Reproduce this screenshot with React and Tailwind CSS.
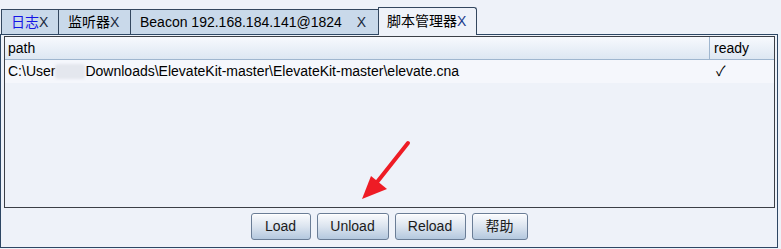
import React from 'react'

const TABS = [
  { label: '日志', active: false, blue: true, width: 'w-[57px]' },
  { label: '监听器', active: false, width: 'w-[72px]' },
  { label: 'Beacon 192.168.184.141@1824', active: false, width: 'w-[248px]', spread: true },
  { label: '脚本管理器', active: true, width: 'w-[99px]' },
]

const BUTTONS = [
  { label: 'Load', width: 'w-[60px]' },
  { label: 'Unload', width: 'w-[72px]' },
  { label: 'Reload', width: 'w-[71px]' },
  { label: '帮助', width: 'w-[56px]' },
]

function Tab({ tab }) {
  if (tab.active) {
    return (
      <div className={`${tab.width} relative -mb-px flex h-[28px] items-center whitespace-nowrap rounded-tr-[3px] border border-b-0 border-[#33475f] bg-[#eef2f9] pl-[8px] text-[14px] text-black`}>
        {tab.label}
        <span className="text-[#1a3c8c]">X</span>
      </div>
    )
  }
  return (
    <div className={`${tab.width} flex h-[25px] items-center whitespace-nowrap border border-b-0 border-r-0 border-[#33475f] bg-[#c9d9ea] pl-[9px] pr-[12px] text-[14px] ${tab.spread ? 'justify-between' : ''}`}>
      <span className={tab.blue ? 'text-[#1515e6]' : 'text-black'}>
        {tab.label}
        {!tab.spread && <span className="text-[#1a2a40]">X</span>}
      </span>
      {tab.spread && <span className="text-[#1a2a40]">X</span>}
    </div>
  )
}

export default function App() {
  return (
    <div className="relative h-[249px] w-[781px] overflow-hidden bg-[#eef2f9] font-['Liberation_Sans','Noto_Sans_CJK_SC',sans-serif]">
      <div className="h-[6px]" />

      <div className="flex h-[28px] items-end pl-[1px]">
        {TABS.map(tab => <Tab key={tab.label} tab={tab} />)}
      </div>

      <div className="mr-[3px] h-[214px] border border-[#2d4764] bg-[#eef2f9] pt-[1px]">
        <div className="ml-[3px] mr-[2px] flex h-[172px] flex-col border border-[#3b3f46] bg-[#eef2f9]">
          <div className="flex h-[23px] border-b border-[#9fb6cf] bg-gradient-to-b from-[#f7f9fd] to-[#dde7f2] text-[14px] text-black">
            <div className="flex w-[705px] items-center border-r border-[#9fb6cf] pl-[3px]">path</div>
            <div className="flex flex-1 items-center pl-[4px]">ready</div>
          </div>
          <div className="flex h-[23px] bg-[#f5f7fc] text-[14px] text-black">
            <div className="flex w-[706px] items-center whitespace-nowrap pl-[3px]">
              C:\User
              <span className="inline-block h-[15px] w-[30px] rounded-[3px] bg-[#e4e7ee] blur-[1px]" />
              Downloads\ElevateKit-master\ElevateKit-master\elevate.cna
            </div>
            <div className="flex flex-1 items-center pl-[5px] text-[14px]">✓</div>
          </div>
        </div>

        <div className="flex justify-center gap-[6px] pt-[5px]">
          {BUTTONS.map(btn => (
            <div
              key={btn.label}
              className={`${btn.width} flex h-[27px] items-center justify-center rounded-[3px] border border-[#6a7d96] bg-gradient-to-b from-[#fbfcfe] via-[#dbe4ef] to-[#b4c8de] text-[14px] text-[#1b1b1b] shadow-[inset_0_1px_0_#ffffff]`}
            >
              {btn.label}
            </div>
          ))}
        </div>
      </div>

      <svg className="absolute left-[355px] top-[136px]" width="60" height="70" viewBox="0 0 60 70">
        <line x1="53" y1="7" x2="15" y2="55" stroke="#ee1c25" strokeWidth="4" strokeLinecap="round" />
        <polygon points="7,63 16,40 32,53" fill="#ee1c25" />
      </svg>
    </div>
  )
}
